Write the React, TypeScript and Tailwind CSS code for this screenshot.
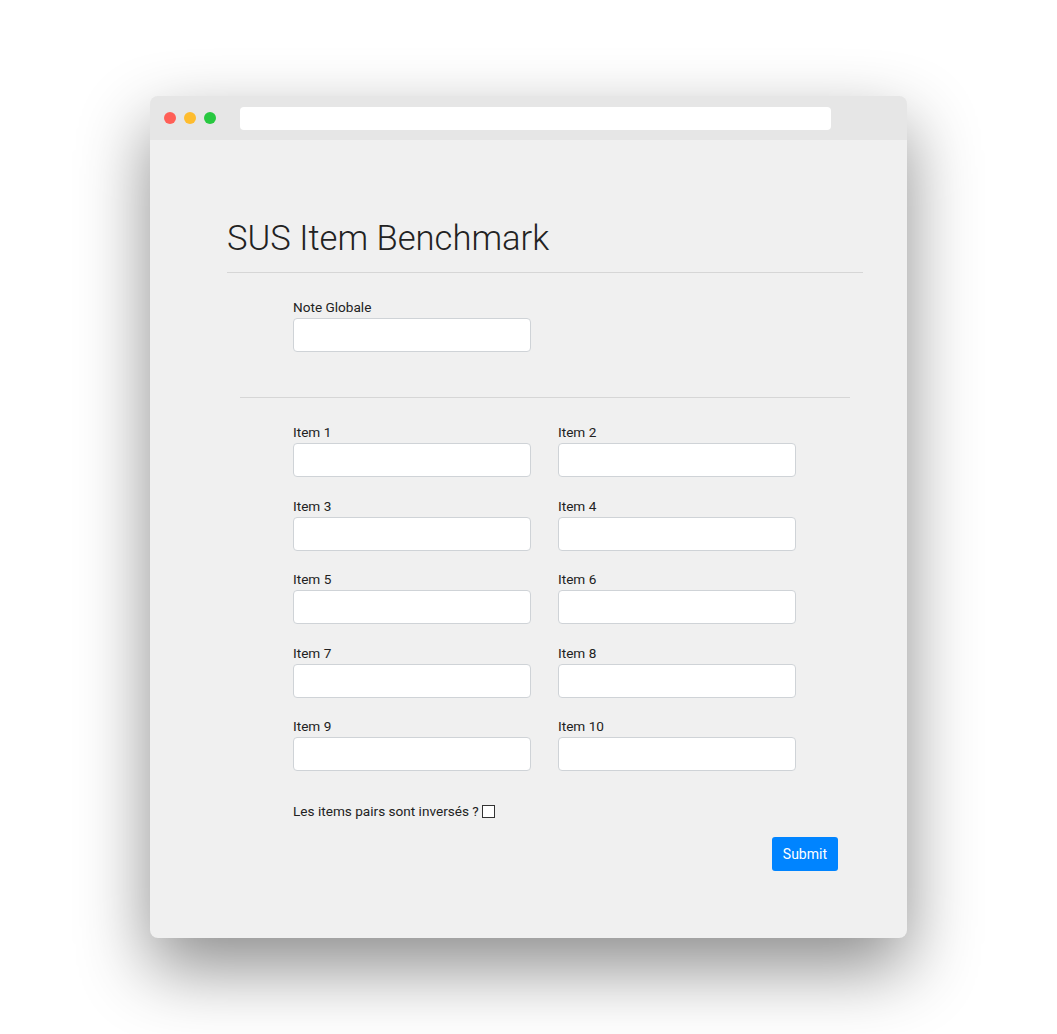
import React from "react";

const Field = ({ label }: { label: string }) => (
	<div className="flex flex-col w-[238px]">
		<label className="text-[13.6px] leading-[17px] text-[#222] mb-[2px]">{label}</label>
		<input
			type="text"
			className="h-[34px] w-full bg-white border border-[#cfd3d7] rounded-[4px] outline-none"
		/>
	</div>
);

const App = () => {
	const items = Array.from({ length: 10 }, (_, i) => `Item ${i + 1}`);

	return (
		<div
			className="min-h-[1034px] bg-white pt-[96px] pl-[150px]"
			style={{ fontFamily: "Roboto, 'Open Sans', sans-serif" }}
		>
			<div className="w-[757px] h-[842px] rounded-[8px] overflow-hidden bg-[#f0f0f0] shadow-[0_30px_70px_rgba(0,0,0,0.45)] flex flex-col">
				<div className="h-[44px] bg-[#e6e6e6] flex items-center px-[14px]">
					<div className="flex gap-[8px]">
						<span className="w-[12px] h-[12px] rounded-full bg-[#ff5f57]" />
						<span className="w-[12px] h-[12px] rounded-full bg-[#febc2e]" />
						<span className="w-[12px] h-[12px] rounded-full bg-[#28c840]" />
					</div>
					<div className="ml-[24px] w-[591px] h-[23px] bg-white rounded-[4px]" />
				</div>

				<div className="flex-1 pt-[77px] pl-[77px] pr-[44px]">
					<h1 className="text-[34.6px] leading-[42px] font-light text-[#222]">
						SUS Item Benchmark
					</h1>
					<div className="mt-[13px] border-t border-[#d6d6d6]" />

					<div className="px-[13px]">
						<div className="pl-[53px] pt-[26px]">
							<Field label="Note Globale" />
						</div>
						<div className="mt-[45px] border-t border-[#d6d6d6]" />

						<div className="pl-[53px] pt-[26px] grid grid-cols-[238px_238px] gap-x-[27px] gap-y-[20.5px]">
							{items.map((it) => (
								<Field key={it} label={it} />
							))}
						</div>

						<div className="pl-[53px] mt-[32px] flex items-center text-[13.6px] leading-[17px] text-[#222]">
							<span>Les items pairs sont inversés ?</span>
							<input
								type="checkbox"
								className="ml-[3px] appearance-none w-[13px] h-[13px] border border-[#333] bg-white"
							/>
						</div>

						<div className="flex justify-end pr-[12px] mt-[17px]">
							<button className="h-[34px] px-[11px] bg-[#0084ff] text-white text-[14px] rounded-[3px]">
								Submit
							</button>
						</div>
					</div>
				</div>
			</div>
		</div>
	);
};

export default App;
